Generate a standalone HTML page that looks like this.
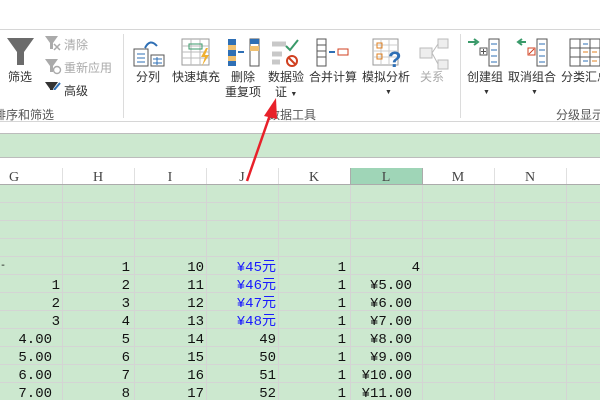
<!DOCTYPE html>
<html><head><meta charset="utf-8"><style>
*{margin:0;padding:0;box-sizing:border-box}
body{width:600px;height:400px;overflow:hidden;background:#fff;position:relative;font-family:"Liberation Sans","Noto Sans CJK SC",sans-serif}
.a{position:absolute}
.lbl{position:absolute;font-size:12px;color:#333;white-space:nowrap;line-height:14px}
.gl{position:absolute;font-size:12px;color:#555;white-space:nowrap}
.grid{position:absolute;left:0;top:185px;width:600px;height:215px;background:#cce8cf}
.v{position:absolute;top:0;width:1px;height:215px;background:#d4d4d4}
.h{position:absolute;left:0;width:600px;height:1px;background:#d4d4d4}
.c{position:absolute;font-family:"Liberation Mono","Noto Sans CJK SC",monospace;font-size:14px;line-height:18px;text-align:right;color:#111}
.hd{position:absolute;top:170px;font-family:"Liberation Serif",serif;font-size:14px;color:#444;text-align:center;width:72px}
</style></head><body>
<div class="a" style="left:0;top:29px;width:600px;height:1px;background:#d6d6d6"></div>
<div class="a" style="left:0;top:121px;width:600px;height:1px;background:#d6d6d6"></div>
<div class="a" style="left:123px;top:34px;width:1px;height:84px;background:#dcdcdc"></div>
<div class="a" style="left:460px;top:34px;width:1px;height:84px;background:#dcdcdc"></div>
<svg class="a" style="left:0;top:30px" width="600" height="60">
<path d="M7 8 H34 L24 22 V35 H17 V22 Z" fill="#6b6b6b"/>
<path d="M45 6 H58 L53 13 V19 H50 V13Z" fill="#aaa"/><path d="M54 14 l6 6 M60 14 l-6 6" stroke="#aaa" stroke-width="1.5"/>
<path d="M45 29 H58 L53 36 V42 H50 V36Z" fill="#aaa"/><circle cx="57" cy="40" r="3.5" fill="none" stroke="#aaa" stroke-width="1.4"/>
<path d="M45 52 H58 L53 59 V60 H50 V59Z" fill="#333"/><path d="M54 60 l6 -7" stroke="#2e6fb5" stroke-width="2"/>
<path d="M145 18 q5 -10 12 -2" stroke="#2e6fb5" stroke-width="2" fill="none"/>
<rect x="134" y="19" width="14" height="17" fill="#fff" stroke="#555"/><path d="M137 24h8M137 28h8M137 32h8" stroke="#2e6fb5"/>
<rect x="151" y="25" width="13" height="11" fill="#fff" stroke="#555"/><path d="M153 29h9M153 33h9M157 27v8" stroke="#2e6fb5"/>
<rect x="182" y="9" width="27" height="26" fill="#fff" stroke="#999"/><path d="M182 16h27M182 22h27M182 28h27M191 9v26M200 9v26" stroke="#bbb"/><rect x="189" y="14" width="13" height="5" fill="none" stroke="#3a9a6a"/><path d="M206 18 l-5 9 h4 l-3 9 l7 -11 h-4 l3 -7z" fill="#f0b030"/>
<rect x="228" y="9" width="8" height="27" fill="#2e6fb5"/><rect x="228" y="15" width="8" height="5" fill="#f0c070"/><rect x="228" y="26" width="8" height="5" fill="#f0c070"/>
<path d="M238 22h6" stroke="#2e6fb5" stroke-width="2"/><rect x="250" y="9" width="9" height="27" fill="#fff" stroke="#555"/><rect x="250" y="9" width="9" height="5" fill="#2e6fb5"/><rect x="250" y="16" width="9" height="5" fill="#f0c070"/>
<path d="M272 14h14M272 24h10M272 32h8" stroke="#777" stroke-width="5" opacity=".4"/><path d="M286 16 l4 4 l8 -10" stroke="#3a9a6a" stroke-width="2" fill="none"/><circle cx="292" cy="31" r="5" fill="#fff" stroke="#d04020" stroke-width="2"/><path d="M289 28 l6 6" stroke="#d04020" stroke-width="2"/>
<rect x="317" y="9" width="9" height="27" fill="#fff" stroke="#555"/><path d="M317 15h9M317 21h9M317 27h9" stroke="#555"/><path d="M329 22h6" stroke="#2e6fb5" stroke-width="2"/><rect x="338" y="19" width="10" height="6" fill="#fff" stroke="#d04020"/>
<rect x="373" y="9" width="25" height="26" fill="#fff" stroke="#999"/><path d="M373 15h25M373 21h25M373 27h25M381 9v26M389 9v26" stroke="#ccc"/><rect x="377" y="13" width="5" height="5" fill="none" stroke="#e08020"/><rect x="377" y="24" width="5" height="5" fill="none" stroke="#e08020"/>
<text x="388" y="37" font-size="22" font-weight="bold" fill="#2e6fb5" font-family="Liberation Sans">?</text>
<rect x="420" y="18" width="12" height="10" fill="#eee" stroke="#bbb"/><rect x="438" y="9" width="10" height="9" fill="#eee" stroke="#bbb"/><rect x="438" y="30" width="10" height="9" fill="#eee" stroke="#bbb"/><path d="M432 23 L438 14 M432 23 L438 34" stroke="#bbb"/>
<path d="M468 12h8" stroke="#3a9a6a" stroke-width="2"/><path d="M474 9l4 3l-4 3" fill="none" stroke="#3a9a6a" stroke-width="2"/>
<rect x="480" y="18" width="7" height="7" fill="#fff" stroke="#555"/><path d="M483.5 19v5M481 21.5h5" stroke="#555"/><rect x="489" y="9" width="10" height="27" fill="#fff" stroke="#555"/><path d="M491 14h6M491 20h6M491 26h6M491 32h6" stroke="#2e6fb5"/>
<path d="M518 12h8" stroke="#3a9a6a" stroke-width="2"/><path d="M522 9l-4 3l4 3" fill="none" stroke="#3a9a6a" stroke-width="2"/>
<rect x="528" y="18" width="7" height="7" fill="#fff" stroke="#d04020"/><path d="M529 24l5 -5" stroke="#d04020"/><rect x="537" y="9" width="10" height="27" fill="#fff" stroke="#555"/><path d="M539 14h6M539 20h6M539 26h6M539 32h6" stroke="#2e6fb5"/>
<rect x="570" y="9" width="30" height="27" fill="#fff" stroke="#555"/><path d="M570 18h30M570 27h30M580 9v27M590 9v27" stroke="#555"/><path d="M583 22h5M592 22h5M583 31h5M592 31h5" stroke="#e08020"/><path d="M583 14h5M583 31h5" stroke="#2e6fb5"/>
</svg>
<div class="lbl" style="left:8px;top:70px">筛选</div>
<div class="lbl" style="left:64px;top:38px;color:#aaa">清除</div>
<div class="lbl" style="left:64px;top:61px;color:#aaa">重新应用</div>
<div class="lbl" style="left:64px;top:84px">高级</div>
<div class="lbl" style="left:136px;top:70px">分列</div>
<div class="lbl" style="left:172px;top:70px">快速填充</div>
<div class="lbl" style="left:231px;top:70px">删除</div>
<div class="lbl" style="left:225px;top:85px">重复项</div>
<div class="lbl" style="left:268px;top:70px">数据验</div>
<div class="lbl" style="left:275px;top:85px">证 <span style="font-size:7px">▼</span></div>
<div class="lbl" style="left:309px;top:70px">合并计算</div>
<div class="lbl" style="left:362px;top:70px">模拟分析</div>
<div class="lbl" style="left:385px;top:86px;font-size:7px">▼</div>
<div class="lbl" style="left:420px;top:70px;color:#aaa">关系</div>
<div class="lbl" style="left:467px;top:70px">创建组</div>
<div class="lbl" style="left:483px;top:86px;font-size:7px">▼</div>
<div class="lbl" style="left:508px;top:70px">取消组合</div>
<div class="lbl" style="left:531px;top:86px;font-size:7px">▼</div>
<div class="lbl" style="left:561px;top:70px">分类汇总</div>
<div class="gl" style="left:-6px;top:106px">排序和筛选</div>
<div class="gl" style="left:268px;top:106px">数据工具</div>
<div class="gl" style="left:556px;top:106px">分级显示</div>
<div class="a" style="left:0;top:133px;width:600px;height:25px;background:#cce8cf;border-top:1px solid #bcbcbc;border-bottom:1px solid #bcbcbc"></div>
<div class="a" style="left:350px;top:168px;width:72px;height:17px;background:#9fd5b7"></div>
<div class="a" style="left:0;top:184px;width:600px;height:1px;background:#ababab"></div>
<div class="a" style="left:62px;top:168px;width:1px;height:16px;background:#e0e0e0"></div>
<div class="a" style="left:134px;top:168px;width:1px;height:16px;background:#e0e0e0"></div>
<div class="a" style="left:206px;top:168px;width:1px;height:16px;background:#e0e0e0"></div>
<div class="a" style="left:278px;top:168px;width:1px;height:16px;background:#e0e0e0"></div>
<div class="a" style="left:350px;top:168px;width:1px;height:16px;background:#ababab"></div>
<div class="a" style="left:422px;top:168px;width:1px;height:16px;background:#ababab"></div>
<div class="a" style="left:494px;top:168px;width:1px;height:16px;background:#e0e0e0"></div>
<div class="a" style="left:566px;top:168px;width:1px;height:16px;background:#e0e0e0"></div>
<div class="hd" style="left:-22px">G</div><div class="hd" style="left:62px">H</div><div class="hd" style="left:134px">I</div><div class="hd" style="left:206px">J</div><div class="hd" style="left:278px">K</div><div class="hd" style="left:350px">L</div><div class="hd" style="left:422px">M</div><div class="hd" style="left:494px">N</div>
<div class="grid">
<div class="v" style="left:62px"></div><div class="v" style="left:134px"></div><div class="v" style="left:206px"></div><div class="v" style="left:278px"></div><div class="v" style="left:350px"></div><div class="v" style="left:422px"></div><div class="v" style="left:494px"></div><div class="v" style="left:566px"></div>
<div class="h" style="top:17px"></div><div class="h" style="top:35px"></div><div class="h" style="top:53px"></div><div class="h" style="top:71px"></div><div class="h" style="top:89px"></div><div class="h" style="top:107px"></div><div class="h" style="top:125px"></div><div class="h" style="top:143px"></div><div class="h" style="top:161px"></div><div class="h" style="top:179px"></div><div class="h" style="top:197px"></div>
</div>
<div class="c" style="left:0;top:258px;width:4px;font-size:10px">-</div>
<div class="c" style="left:62px;top:259px;width:68px">1<br>2<br>3<br>4<br>5<br>6<br>7<br>8</div>
<div class="c" style="left:134px;top:259px;width:70px">10<br>11<br>12<br>13<br>14<br>15<br>16<br>17</div>
<div class="c" style="left:206px;top:259px;width:70px;color:#1a1aff">¥45元<br>¥46元<br>¥47元<br>¥48元<br><span style="color:#111">49<br>50<br>51<br>52</span></div>
<div class="c" style="left:278px;top:259px;width:68px">1<br>1<br>1<br>1<br>1<br>1<br>1<br>1</div>
<div class="c" style="left:350px;top:259px;width:70px">4</div>
<div class="c" style="left:350px;top:277px;width:62px">¥5.00<br>¥6.00<br>¥7.00<br>¥8.00<br>¥9.00<br>¥10.00<br>¥11.00</div>
<div class="c" style="left:0;top:277px;width:60px">1<br>2<br>3</div>
<div class="c" style="left:0;top:331px;width:52px">4.00<br>5.00<br>6.00<br>7.00</div>
<svg class="a" style="left:0;top:0" width="600" height="400">
<line x1="247" y1="181" x2="271" y2="112" stroke="#e8212a" stroke-width="2.5"/>
<path d="M276 98 L264 116 L277 119 Z" fill="#e8212a"/>
</svg>
</body></html>
